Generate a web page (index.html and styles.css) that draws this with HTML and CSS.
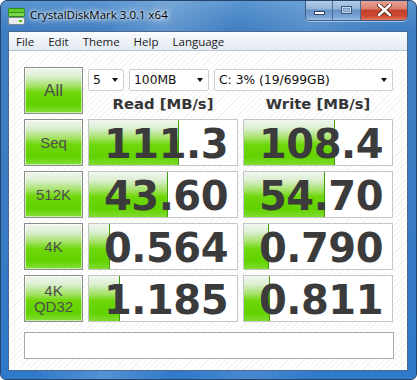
FILE: index.html
```html
<!DOCTYPE html>
<html>
<head>
<meta charset="utf-8">
<link rel="stylesheet" href="styles.css">
</head>
<body>
<div class="window">
  <div class="titlebar">
    <svg class="app-icon" width="17" height="17" viewBox="0 0 17 17">
      <rect x="0.5" y="0.5" width="16" height="4" rx="1" fill="#5fcf2a" stroke="#2f8a18"/>
      <rect x="0.5" y="4.5" width="16" height="4" rx="1" fill="#7ad84a" stroke="#2f8a18"/>
      <rect x="0.5" y="9.5" width="16" height="7" rx="1.5" fill="#e8ecef" stroke="#7d8a94"/>
      <rect x="11" y="12" width="3" height="2" fill="#45c21a"/>
    </svg>
    <span class="title">CrystalDiskMark 3.0.1 x64</span>
    <div class="caption-btns">
      <div class="cbtn cmin"><span class="min-glyph"></span></div>
      <div class="cbtn cmax"><span class="max-glyph"></span></div>
      <div class="cbtn cclose">
        <svg width="15" height="12" viewBox="0 0 15 12">
          <path d="M2 1 L13 11 M13 1 L2 11" stroke="#4a1a12" stroke-width="4.2" stroke-linecap="round"/>
          <path d="M2 1 L13 11 M13 1 L2 11" stroke="#ffffff" stroke-width="2.6" stroke-linecap="round"/>
        </svg>
      </div>
    </div>
  </div>
  <div class="client">
    <div class="menubar">
      <span class="menu-item">File</span>
      <span class="menu-item">Edit</span>
      <span class="menu-item">Theme</span>
      <span class="menu-item">Help</span>
      <span class="menu-item">Language</span>
    </div>
    <div class="content">
      <div class="grid">
        <div class="btn btn-all">All</div>
        <div class="top-right">
          <div class="selects">
            <div class="select sel-count"><span>5</span><span class="arrow"></span></div>
            <div class="select sel-size"><span>100MB</span><span class="arrow"></span></div>
            <div class="select sel-drive"><span>C: 3% (19/699GB)</span><span class="arrow"></span></div>
          </div>
          <div class="headers">
            <span class="header">Read [MB/s]</span>
            <span class="header">Write [MB/s]</span>
          </div>
        </div>

        <div class="btn">Seq</div>
        <div class="cell"><div class="bar" style="width:90px"></div><span class="val">111.3</span></div>
        <div class="cell"><div class="bar" style="width:91px"></div><span class="val">108.4</span></div>

        <div class="btn btn-small">512K</div>
        <div class="cell"><div class="bar" style="width:79px"></div><span class="val">43.60</span></div>
        <div class="cell"><div class="bar" style="width:81px"></div><span class="val">54.70</span></div>

        <div class="btn btn-small">4K</div>
        <div class="cell"><div class="bar" style="width:21px"></div><span class="val">0.564</span></div>
        <div class="cell"><div class="bar" style="width:25px"></div><span class="val">0.790</span></div>

        <div class="btn btn-two"><span>4K</span><span>QD32</span></div>
        <div class="cell"><div class="bar" style="width:31px"></div><span class="val">1.185</span></div>
        <div class="cell"><div class="bar" style="width:26px"></div><span class="val">0.811</span></div>
      </div>
      <div class="status"></div>
    </div>
  </div>
</div>
</body>
</html>
```
FILE: styles.css
```css
* { box-sizing: border-box; }
html, body { margin: 0; padding: 0; background: #ffffff; }

.window {
  width: 417px;
  height: 380px;
  border: 1px solid #23456d;
  border-radius: 7px 7px 6px 6px;
  background:
    linear-gradient(100deg, rgba(255,255,255,0) 20%, rgba(255,255,255,0.18) 35%, rgba(255,255,255,0) 50%, rgba(255,255,255,0.12) 65%, rgba(255,255,255,0) 80%),
    linear-gradient(to bottom, #5a95d0 0px, #4c89c8 14px, #3f7ec2 30px, #3a7bc3 200px, #2f79ca 100%);
  display: flex;
  flex-direction: column;
  overflow: hidden;
  font-family: "Open Sans", "DejaVu Sans", sans-serif;
}

.titlebar {
  height: 30px;
  display: flex;
  align-items: flex-start;
  position: relative;
}
.app-icon { margin: 7px 0 0 7px; flex: none; }
.title {
  margin: 6px 0 0 5px;
  font-size: 11.5px;
  line-height: 16px;
  color: #000;
  text-shadow: 0 0 6px #ffffff, 0 0 3px #ffffff, 0 0 8px rgba(255,255,255,0.8);
}
.caption-btns {
  margin-left: auto;
  margin-right: 8px;
  margin-top: -1px;
  display: flex;
  height: 21px;
  border: 1px solid #3a5b82;
  border-top: none;
  border-radius: 0 0 5px 5px;
  overflow: hidden;
  box-shadow: 0 1px 0 rgba(255,255,255,0.5);
}
.cbtn {
  display: flex;
  align-items: center;
  justify-content: center;
  height: 100%;
}
.cmin, .cmax {
  width: 27px;
  background: linear-gradient(to bottom, #b7cfe9 0%, #92b4da 45%, #6790c3 50%, #7aa5d5 85%, #9cc3e8 100%);
  border-right: 1px solid #4a6c95;
}
.cmax { width: 28px; }
.cclose {
  width: 46px;
  background: linear-gradient(to bottom, #e5a597 0%, #d9806e 45%, #c4402c 50%, #cc4a33 80%, #e27a5e 100%);
}
.min-glyph {
  width: 11px;
  height: 4px;
  margin-top: 5px;
  background: #fff;
  border: 1px solid #2e4566;
}
.max-glyph {
  width: 11px;
  height: 8px;
  border: 1px solid #39577e;
  box-shadow: inset 0 0 0 1px #c8d8ea, inset 0 0 0 2px #7a98bd;
  background: #9fbadb;
}

.client {
  margin: 0 8px 0 7px;
  height: 340px;
  border: 1px solid #4a6a92;
  background: #fff;
  display: flex;
  flex-direction: column;
}
.menubar {
  height: 19px;
  flex: none;
  display: flex;
  align-items: center;
  background: linear-gradient(to bottom, #fbfcfe 0%, #eef2f8 50%, #e4eaf3 100%);
  border-bottom: 1px solid #b9c4d4;
}
.menu-item {
  padding: 0 7px;
  font-size: 11.5px;
  color: #1a1a1a;
  line-height: 19px;
}

.content {
  flex: 1;
  padding: 16px 0 0 15px;
  background: repeating-linear-gradient(135deg, #ffffff 0px, #ffffff 3px, #f3f3f3 3px, #f3f3f3 4px);
}
.grid {
  display: grid;
  grid-template-columns: 59px 150px 150px;
  grid-auto-rows: 47px;
  column-gap: 5px;
  row-gap: 5px;
}
.btn {
  border: 1px solid #8c8c8c;
  background: linear-gradient(to bottom, #f2f6f0 0%, #dcefd2 18%, #a5e266 40%, #6ed70a 55%, #62d200 82%, #86df3c 100%);
  box-shadow: inset 0 0 0 1px rgba(255,255,255,0.55);
  display: flex;
  align-items: center;
  justify-content: center;
  font-family: "Liberation Sans", Arial, sans-serif;
  font-size: 15px;
  color: #4e4e4e;
}
.btn-all { font-size: 17px; }
.btn-small { font-size: 15px; }
.btn-two {
  flex-direction: column;
  font-size: 15px;
  line-height: 16px;
}

.top-right {
  grid-column: span 2;
  display: flex;
  flex-direction: column;
}
.selects {
  display: flex;
  margin-top: 2px;
  height: 22px;
}
.select {
  height: 22px;
  background: #fff;
  border: 1px solid #cfcfcf;
  border-radius: 2px;
  display: flex;
  align-items: center;
  justify-content: space-between;
  padding: 0 5px 0 4px;
  font-family: "DejaVu Sans", sans-serif;
  font-size: 12.3px;
  color: #111;
}
.sel-count { width: 36px; margin-right: 5px; }
.sel-size { width: 80px; margin-right: 5px; }
.sel-drive { width: 179px; }
.arrow {
  width: 0;
  height: 0;
  border-left: 3.5px solid transparent;
  border-right: 3.5px solid transparent;
  border-top: 4px solid #111;
}
.headers {
  display: grid;
  grid-template-columns: 150px 150px;
  column-gap: 5px;
  height: 23px;
  padding-top: 3px;
}
.header {
  text-align: center;
  font-family: "DejaVu Sans", sans-serif;
  font-weight: bold;
  font-size: 14.8px;
  line-height: 20px;
  color: #353535;
}

.cell {
  position: relative;
  border: 1px solid #c6c6c6;
  background: #fff;
  overflow: hidden;
  display: flex;
  align-items: center;
  justify-content: flex-end;
  padding-right: 9px;
}
.bar {
  position: absolute;
  left: 0;
  top: 0;
  bottom: 0;
  background: linear-gradient(to bottom, #f2f6f0 0%, #dcefd2 18%, #a5e266 40%, #6ed70a 55%, #62d200 82%, #80dc30 100%);
  border-right: 1px solid #3f9a0c;
}
.val {
  position: relative;
  font-family: "DejaVu Sans", sans-serif;
  font-weight: bold;
  font-size: 40px;
  line-height: 47px;
  letter-spacing: -0.5px;
  color: #3b3b3b;
  margin-top: 3px;
}

.status {
  margin-top: 10px;
  width: 370px;
  height: 27px;
  border: 1px solid #a9a9a9;
  background: #fff;
}
```
